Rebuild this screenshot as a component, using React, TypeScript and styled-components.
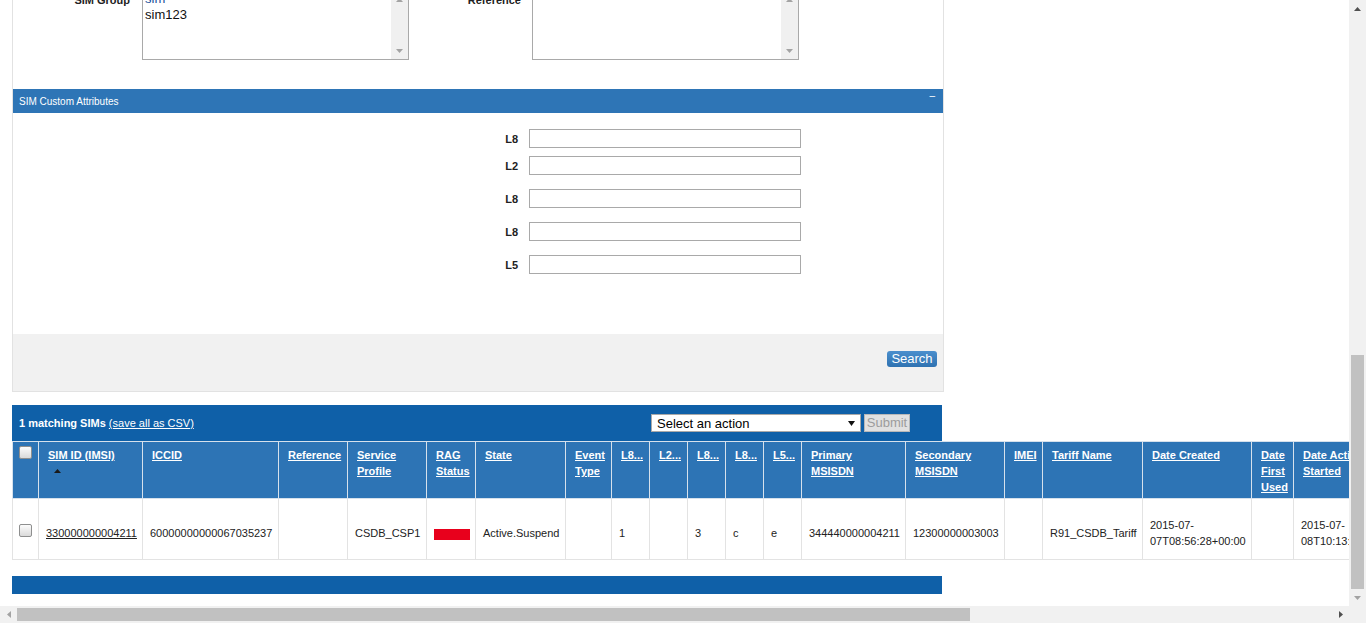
import React from 'react';
import styled, { createGlobalStyle } from 'styled-components';

const GlobalStyle = createGlobalStyle`
  html, body {
    margin: 0;
    padding: 0;
    overflow: hidden;
    background: #fff;
  }
  body {
    font-family: 'Liberation Sans', Arial, sans-serif;
    color: #222;
  }
  * {
    box-sizing: border-box;
  }
`;

const Screen = styled.div`
  display: grid;
  grid-template-columns: 1349px 17px;
  grid-template-rows: 606px 17px;
  width: 1366px;
  height: 623px;
  overflow: hidden;
`;

const Viewport = styled.div`
  overflow: hidden;
  background: #fff;
`;

const Page = styled.div`
  margin-top: -21px;
  padding-left: 12px;
`;

/* search form */

const Panel = styled.section`
  width: 932px;
  border: 1px solid #e2e2e2;
  background: #fff;
`;

const FieldsGrid = styled.div`
  display: grid;
  grid-template-columns: 129px 267px 123px 267px;
  align-items: start;
  padding: 10px 0 29px;
`;

const FieldLabel = styled.label<{ $gap: number }>`
  padding-top: 3px;
  padding-right: ${(p) => p.$gap}px;
  text-align: right;
  font-size: 11px;
  font-weight: bold;
  line-height: 14px;
  color: #222;
`;

const ListBox = styled.div`
  display: flex;
  height: 70px;
  border: 1px solid #a9a9a9;
  background: #fff;
`;

const ListOptions = styled.div`
  flex: 1;
  padding: 0 2px;
  font-size: 13px;
  line-height: 16px;
  color: #111;
`;

const ListOption = styled.div<{ $selected?: boolean }>`
  color: ${(p) => (p.$selected ? '#1a4f9a' : '#111')};
`;

const ListScroll = styled.div`
  display: flex;
  flex-direction: column;
  justify-content: space-between;
  width: 17px;
  background: #f0f0f0;
`;

const SectionHeader = styled.div`
  display: flex;
  justify-content: space-between;
  align-items: center;
  height: 24px;
  padding: 0 8px 0 6px;
  background: #2e75b6;
  color: #fff;
  font-size: 10px;
`;

const Collapse = styled.span`
  align-self: flex-start;
  margin-top: 1px;
  font-size: 10px;
  line-height: 12px;
`;

const AttrBody = styled.div`
  padding: 16px 0 60px;
`;

const AttrRow = styled.div<{ $top: number }>`
  display: grid;
  grid-template-columns: 516px 272px;
  align-items: center;
  margin-top: ${(p) => p.$top}px;
`;

const AttrLabel = styled.label`
  text-align: right;
  padding-right: 11px;
  font-size: 11px;
  font-weight: bold;
  line-height: 14px;
  color: #222;
`;

const AttrInput = styled.input`
  width: 100%;
  height: 19px;
  padding: 0 3px;
  border: 1px solid #a9a9a9;
  font-family: inherit;
  font-size: 13px;
  outline: none;
`;

const PanelFooter = styled.div`
  display: flex;
  justify-content: flex-end;
  align-items: flex-start;
  height: 57px;
  padding: 17px 6px 0;
  background: #f1f1f1;
`;

const SearchButton = styled.button`
  width: 50px;
  height: 16px;
  padding: 0;
  border: none;
  border-radius: 3px;
  background: linear-gradient(#4b8fcd, #2f72b1);
  color: #fff;
  font-family: inherit;
  font-size: 13px;
  line-height: 16px;
`;

/* results */

const Results = styled.section`
  margin-top: 13px;
`;

const ResultsBar = styled.div`
  display: flex;
  align-items: center;
  width: 930px;
  height: 36px;
  padding: 0 32px 0 7px;
  background: #0f60a8;
  color: #fff;
  font-size: 11px;
`;

const Summary = styled.div`
  flex: 1;
  font-weight: bold;
`;

const CsvLink = styled.a`
  font-weight: normal;
  color: #fff;
  text-decoration: underline;
`;

const ActionSelect = styled.div`
  display: flex;
  justify-content: space-between;
  align-items: center;
  width: 210px;
  height: 18px;
  padding: 0 5px;
  border: 1px solid #a9a9a9;
  background: #fff;
  color: #000;
  font-size: 13px;
`;

const SubmitButton = styled.button`
  width: 46px;
  height: 18px;
  margin-left: 3px;
  padding: 0;
  border: 1px solid #b8b8b8;
  background: #e1e1e1;
  color: #9c9c9c;
  font-family: inherit;
  font-size: 13px;
  line-height: 16px;
`;

const ResultsTable = styled.table`
  width: 1391px;
  border-collapse: collapse;
  table-layout: fixed;
  font-size: 11px;
`;

const Col = styled.col<{ $w: number }>`
  width: ${(p) => p.$w}px;
`;

const Th = styled.th`
  padding: 5px 4px 3px 9px;
  border: 1px solid #d6e1ec;
  background: #2d74b5;
  color: #fff;
  font-weight: bold;
  line-height: 16px;
  text-align: left;
  vertical-align: top;
  white-space: nowrap;
`;

const CheckTh = styled(Th)`
  padding-left: 6px;
  padding-top: 4px;
`;

const Td = styled.td<{ $wrap?: boolean }>`
  padding: 18px 4px 10px 7px;
  border: 1px solid #e3e3e3;
  color: #222;
  line-height: 16px;
  vertical-align: middle;
  white-space: ${(p) => (p.$wrap ? 'normal' : 'nowrap')};
`;

const CheckTd = styled(Td)`
  padding-left: 6px;
`;

const HeadLink = styled.a`
  color: #fff;
  text-decoration: underline;
`;

const CellLink = styled.a`
  color: #222;
  text-decoration: underline;
`;

const CheckBox = styled.span<{ $below?: number }>`
  display: block;
  width: 13px;
  height: 13px;
  margin-bottom: ${(p) => p.$below ?? 0}px;
  border: 1px solid #8e8f8f;
  border-radius: 2px;
  background: linear-gradient(#fcfcfc, #dadada);
`;

const SortLine = styled.span`
  display: flex;
  align-items: center;
  height: 16px;
  padding-left: 6px;
`;

const RagBar = styled.span`
  display: inline-block;
  width: 36px;
  height: 11px;
  vertical-align: middle;
  background: #e8001c;
`;

const FooterBar = styled.div`
  width: 930px;
  height: 18px;
  margin-top: 16px;
  background: #0f60a8;
`;

/* window scrollbars */

const VScroll = styled.div`
  display: flex;
  flex-direction: column;
  background: #f1f1f1;
`;

const HScroll = styled.div`
  display: flex;
  background: #f1f1f1;
`;

const ArrowCell = styled.div`
  display: flex;
  justify-content: center;
  align-items: center;
  flex: 0 0 17px;
  width: 17px;
  height: 17px;
`;

const VTrack = styled.div`
  display: flex;
  flex-direction: column;
  justify-content: flex-end;
  flex: 1;
  padding: 0 2px;
`;

const HTrack = styled.div`
  display: flex;
  flex: 1;
  padding: 2px 0;
`;

const Thumb = styled.div<{ $len: number; $vertical?: boolean }>`
  background: #c1c1c1;
  ${(p) => (p.$vertical ? `height: ${p.$len}px;` : `width: ${p.$len}px;`)}
`;

const Corner = styled.div`
  background: #f1f1f1;
`;

type Dir = 'up' | 'down' | 'left' | 'right';

const arrowPoints: Record<Dir, string> = {
  up: '0,4 3.5,0 7,4',
  down: '0,0 7,0 3.5,4',
  left: '4,0 4,7 0,3.5',
  right: '0,0 4,3.5 0,7',
};

const Arrow: React.FC<{ dir: Dir; color: string }> = ({ dir, color }) => {
  const wide = dir === 'up' || dir === 'down';
  return (
    <svg width={wide ? 7 : 4} height={wide ? 4 : 7} viewBox={wide ? '0 0 7 4' : '0 0 4 7'}>
      <polygon points={arrowPoints[dir]} fill={color} />
    </svg>
  );
};

const ListBoxField: React.FC<{ options: { text: string; selected?: boolean }[] }> = ({ options }) => (
  <ListBox>
    <ListOptions>
      {options.map((o) => (
        <ListOption key={o.text} $selected={o.selected}>
          {o.text}
        </ListOption>
      ))}
    </ListOptions>
    <ListScroll>
      <ArrowCell>
        <Arrow dir="up" color="#a3a3a3" />
      </ArrowCell>
      <ArrowCell>
        <Arrow dir="down" color="#a3a3a3" />
      </ArrowCell>
    </ListScroll>
  </ListBox>
);

const attributes = [
  { label: 'L8', top: 0 },
  { label: 'L2', top: 8 },
  { label: 'L8', top: 14 },
  { label: 'L8', top: 14 },
  { label: 'L5', top: 14 },
];

const columns: { lines: string[]; width: number }[] = [
  { lines: [], width: 26 },
  { lines: ['SIM ID (IMSI)'], width: 104 },
  { lines: ['ICCID'], width: 136 },
  { lines: ['Reference'], width: 69 },
  { lines: ['Service', 'Profile'], width: 79 },
  { lines: ['RAG', 'Status'], width: 49 },
  { lines: ['State'], width: 90 },
  { lines: ['Event', 'Type'], width: 46 },
  { lines: ['L8...'], width: 38 },
  { lines: ['L2...'], width: 38 },
  { lines: ['L8...'], width: 38 },
  { lines: ['L8...'], width: 38 },
  { lines: ['L5...'], width: 38 },
  { lines: ['Primary', 'MSISDN'], width: 104 },
  { lines: ['Secondary', 'MSISDN'], width: 99 },
  { lines: ['IMEI'], width: 38 },
  { lines: ['Tariff Name'], width: 100 },
  { lines: ['Date Created'], width: 109 },
  { lines: ['Date', 'First', 'Used'], width: 42 },
  { lines: ['Date Activity', 'Started'], width: 110 },
];

const row = {
  imsi: '330000000004211',
  cells: [
    '60000000000067035237',
    '',
    'CSDB_CSP1',
    'RAG',
    'Active.Suspend',
    '',
    '1',
    '',
    '3',
    'c',
    'e',
    '344440000004211',
    '12300000003003',
    '',
    'R91_CSDB_Tariff',
    '2015-07-07T08:56:28+00:00',
    '',
    '2015-07-08T10:13:41+00:00',
  ],
};

const HeaderCell: React.FC<{ lines: string[]; sortable?: boolean }> = ({ lines, sortable }) => (
  <Th>
    <HeadLink href="#">
      {lines.map((l, i) => (
        <React.Fragment key={i}>
          {i > 0 && <br />}
          {l}
        </React.Fragment>
      ))}
    </HeadLink>
    {sortable && (
      <SortLine>
        <Arrow dir="up" color="#1a1a1a" />
      </SortLine>
    )}
  </Th>
);

const App: React.FC = () => {
  return (
    <>
      <GlobalStyle />
      <Screen>
        <Viewport>
          <Page>
            <Panel>
              <FieldsGrid>
                <FieldLabel $gap={12}>SIM Group</FieldLabel>
                <ListBoxField options={[{ text: 'sim', selected: true }, { text: 'sim123' }]} />
                <FieldLabel $gap={11}>Reference</FieldLabel>
                <ListBoxField options={[]} />
              </FieldsGrid>

              <SectionHeader>
                <span>SIM Custom Attributes</span>
                <Collapse>–</Collapse>
              </SectionHeader>
              <AttrBody>
                {attributes.map((a, i) => (
                  <AttrRow key={i} $top={a.top}>
                    <AttrLabel>{a.label}</AttrLabel>
                    <AttrInput type="text" />
                  </AttrRow>
                ))}
              </AttrBody>
              <PanelFooter>
                <SearchButton>Search</SearchButton>
              </PanelFooter>
            </Panel>

            <Results>
              <ResultsBar>
                <Summary>
                  1 matching SIMs <CsvLink href="#">(save all as CSV)</CsvLink>
                </Summary>
                <ActionSelect>
                  <span>Select an action</span>
                  <svg width="7" height="5" viewBox="0 0 7 5">
                    <polygon points="0,0 7,0 3.5,5" fill="#111" />
                  </svg>
                </ActionSelect>
                <SubmitButton disabled>Submit</SubmitButton>
              </ResultsBar>

              <ResultsTable>
                <colgroup>
                  {columns.map((c, i) => (
                    <Col key={i} $w={c.width} />
                  ))}
                </colgroup>
                <thead>
                  <tr>
                    <CheckTh>
                      <CheckBox />
                    </CheckTh>
                    {columns.slice(1).map((c, i) => (
                      <HeaderCell key={i} lines={c.lines} sortable={i === 0} />
                    ))}
                  </tr>
                </thead>
                <tbody>
                  <tr>
                    <CheckTd>
                      <CheckBox $below={6} />
                    </CheckTd>
                    <Td>
                      <CellLink href="#">{row.imsi}</CellLink>
                    </Td>
                    {row.cells.map((v, i) =>
                      v === 'RAG' ? (
                        <Td key={i}>
                          <RagBar />
                        </Td>
                      ) : (
                        <Td key={i} $wrap={v.startsWith('2015')}>
                          {v}
                        </Td>
                      ),
                    )}
                  </tr>
                </tbody>
              </ResultsTable>

              <FooterBar />
            </Results>
          </Page>
        </Viewport>

        <VScroll>
          <ArrowCell>
            <Arrow dir="up" color="#505050" />
          </ArrowCell>
          <VTrack>
            <Thumb $vertical $len={234} />
          </VTrack>
          <ArrowCell>
            <Arrow dir="down" color="#a3a3a3" />
          </ArrowCell>
        </VScroll>

        <HScroll>
          <ArrowCell>
            <Arrow dir="left" color="#a3a3a3" />
          </ArrowCell>
          <HTrack>
            <Thumb $len={953} />
          </HTrack>
          <ArrowCell>
            <Arrow dir="right" color="#505050" />
          </ArrowCell>
        </HScroll>
        <Corner />
      </Screen>
    </>
  );
};

export default App;
